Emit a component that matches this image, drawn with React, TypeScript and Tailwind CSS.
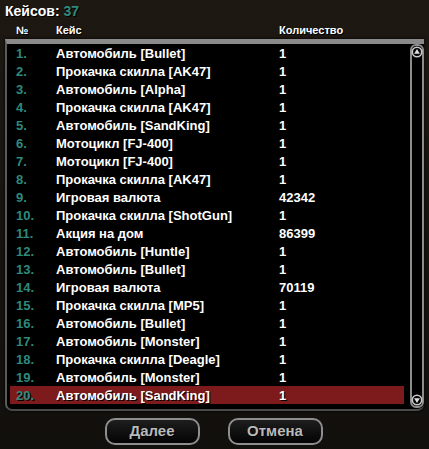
const rows: [string, string][] = [
  ["Автомобиль [Bullet]", "1"],
  ["Прокачка скилла [AK47]", "1"],
  ["Автомобиль [Alpha]", "1"],
  ["Прокачка скилла [AK47]", "1"],
  ["Автомобиль [SandKing]", "1"],
  ["Мотоцикл [FJ-400]", "1"],
  ["Мотоцикл [FJ-400]", "1"],
  ["Прокачка скилла [AK47]", "1"],
  ["Игровая валюта", "42342"],
  ["Прокачка скилла [ShotGun]", "1"],
  ["Акция на дом", "86399"],
  ["Автомобиль [Huntle]", "1"],
  ["Автомобиль [Bullet]", "1"],
  ["Игровая валюта", "70119"],
  ["Прокачка скилла [MP5]", "1"],
  ["Автомобиль [Bullet]", "1"],
  ["Автомобиль [Monster]", "1"],
  ["Прокачка скилла [Deagle]", "1"],
  ["Автомобиль [Monster]", "1"],
  ["Автомобиль [SandKing]", "1"],
];

const selected = 19;

function ScrollBar() {
  return (
    <div className="flex w-[14px] shrink-0 flex-col items-center justify-between rounded-[6px] border-2 border-[#8c8c8c] bg-black">
      <svg width="12" height="12" viewBox="0 0 12 12" aria-hidden>
        <circle cx="6" cy="6" r="4.7" fill="none" stroke="#c8c8c8" strokeWidth="1.6" />
        <path d="M6 2.9 L8.9 7.8 L3.1 7.8 Z" fill="#e0e0e0" />
      </svg>
      <svg width="12" height="12" viewBox="0 0 12 12" aria-hidden>
        <circle cx="6" cy="6" r="4.7" fill="none" stroke="#c8c8c8" strokeWidth="1.6" />
        <path d="M6 9.1 L8.9 4.2 L3.1 4.2 Z" fill="#e0e0e0" />
      </svg>
    </div>
  );
}

function GameButton({ label }: { label: string }) {
  return (
    <button className="flex h-[27px] w-[95px] items-center justify-center rounded-[10px] border-2 border-[#8e8e8e] bg-gradient-to-b from-[#1e1e1e] to-[#050505] text-[15px] font-bold text-[#b9b9b9] [text-shadow:1px_1px_0_#000]">
      {label}
    </button>
  );
}

export default function App() {
  return (
    <div className="relative h-[449px] w-[429px] overflow-hidden bg-gradient-to-b from-[#1d1812] via-[#17130f] to-[#12100d] font-['Liberation_Sans',Arial,sans-serif] text-white [text-shadow:1px_1px_0_#000]">
      <div className="h-[22px] pl-[5px] pt-[3px] text-[14px] font-bold leading-[16px]">
        Кейсов: <span className="text-[#2e8a7c]">37</span>
      </div>

      <div className="flex h-[16px] items-center text-[11px] font-bold leading-none">
        <span className="w-[56px] pl-[16px]">№</span>
        <span className="w-[223px]">Кейс</span>
        <span>Количество</span>
      </div>

      <div className="mx-[5px] mt-[1px] flex h-[372px] rounded-b-[7px] border-b-2 border-l-2 border-t-[5px] border-l-[#5a5a5a] border-b-[#4a4a4a] border-t-[#8a8a8a] bg-black shadow-[0_0_3px_#000]">
        <div className="flex-1 pl-[3px] pr-[6px] pt-[0px]">
          {rows.map(([name, qty], i) => (
            <div
              key={i}
              className={`flex h-[18px] items-center text-[13px] font-bold leading-none ${
                i === selected ? "bg-[#7d1a1c]" : ""
              }`}
            >
              <span className="w-[46px] pl-[6px] text-[#2e8a7c]">{i + 1}.</span>
              <span className="w-[223px] whitespace-nowrap">{name}</span>
              <span>{qty}</span>
            </div>
          ))}
        </div>
        <div className="flex pb-[1px]">
          <ScrollBar />
        </div>
      </div>

      <div className="mt-[7px] flex justify-center gap-[28px] pr-[2px]">
        <GameButton label="Далее" />
        <GameButton label="Отмена" />
      </div>
    </div>
  );
}
